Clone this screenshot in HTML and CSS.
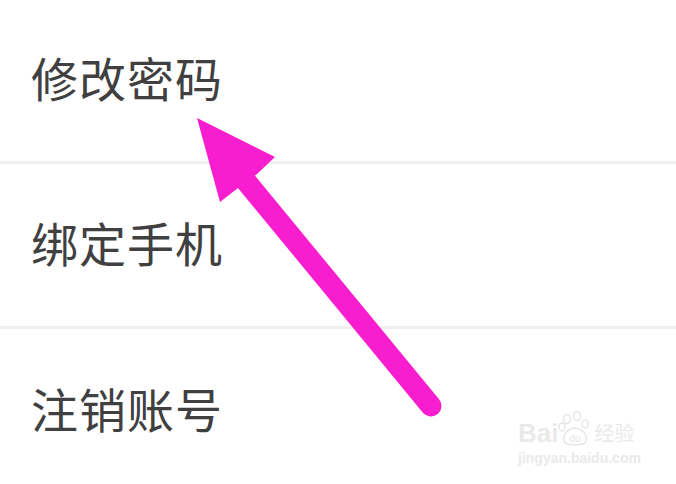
FILE: index.html
```html
<!DOCTYPE html>
<html lang="zh-CN">
<head>
    <meta charset="UTF-8">
    <meta name="viewport" content="width=device-width, initial-scale=1.0">
    <title>账号设置</title>
    <link rel="stylesheet" href="styles.css">
</head>
<body>
    <div class="menu">
        <div class="menu-item">修改密码</div>
        <div class="menu-item">绑定手机</div>
        <div class="menu-item">注销账号</div>
    </div>

    <svg class="arrow" width="676" height="484" viewBox="0 0 676 484">
        <line x1="245" y1="180" x2="431" y2="406" stroke="#f81ecf" stroke-width="21" stroke-linecap="round"/>
        <polygon points="197,118 275,157 257,174 238,188 220,202" fill="#f81ecf"/>
    </svg>

    <div class="watermark">
        <div class="wm-top">
            <span class="wm-bai">Bai</span>
            <svg class="wm-paw" width="34" height="38" viewBox="0 0 34 38">
                <ellipse cx="9" cy="9" rx="3.5" ry="4.5" fill="none" stroke="#e6e6e6" stroke-width="1.5"/>
                <ellipse cx="19" cy="6" rx="3.5" ry="4.5" fill="none" stroke="#e6e6e6" stroke-width="1.5"/>
                <ellipse cx="4" cy="17" rx="3" ry="4" fill="none" stroke="#e6e6e6" stroke-width="1.5"/>
                <ellipse cx="27" cy="14" rx="3" ry="4" fill="none" stroke="#e6e6e6" stroke-width="1.5"/>
                <path d="M6 31 C4 23 12 18 17 18 C22 18 30 23 28 31 C27 36 7 36 6 31 Z" fill="none" stroke="#e6e6e6" stroke-width="1.5"/>
                <text x="17" y="32" text-anchor="middle" font-size="10" font-family="Liberation Sans, sans-serif" fill="#e6e6e6">du</text>
            </svg>
            <span class="wm-jy">经验</span>
        </div>
        <div class="wm-url">jingyan.baidu.com</div>
    </div>
</body>
</html>
```

FILE: styles.css
```css
body {
    margin: 0;
    background-color: #fff;
    font-family: "Noto Sans CJK SC", "Noto Sans", sans-serif;
    color: #404040;
    overflow: hidden;
    width: 676px;
    height: 484px;
}

.menu {
    margin-top: -1px;
}

.menu-item {
    box-sizing: border-box;
    height: 165px;
    display: flex;
    align-items: center;
    padding-left: 31px;
    padding-bottom: 8px;
    font-size: 47px;
    letter-spacing: 1px;
    border-bottom: 3px solid #f0f0f0;
}

.menu-item:last-child {
    border-bottom: none;
}

.arrow {
    position: absolute;
    top: 0;
    left: 0;
}

.watermark {
    position: absolute;
    left: 518px;
    top: 410px;
    color: #eaeaea;
    font-family: "Liberation Sans", sans-serif;
}

.wm-top {
    display: flex;
    align-items: flex-end;
}

.wm-bai {
    font-size: 26px;
    font-weight: bold;
    line-height: 26px;
    margin-bottom: 2px;
}

.wm-jy {
    font-family: "Noto Sans CJK SC", sans-serif;
    font-size: 20px;
    line-height: 26px;
    margin-bottom: 2px;
    margin-left: 2px;
}

.wm-url {
    font-size: 14px;
    font-weight: bold;
    margin-top: 2px;
}
```
